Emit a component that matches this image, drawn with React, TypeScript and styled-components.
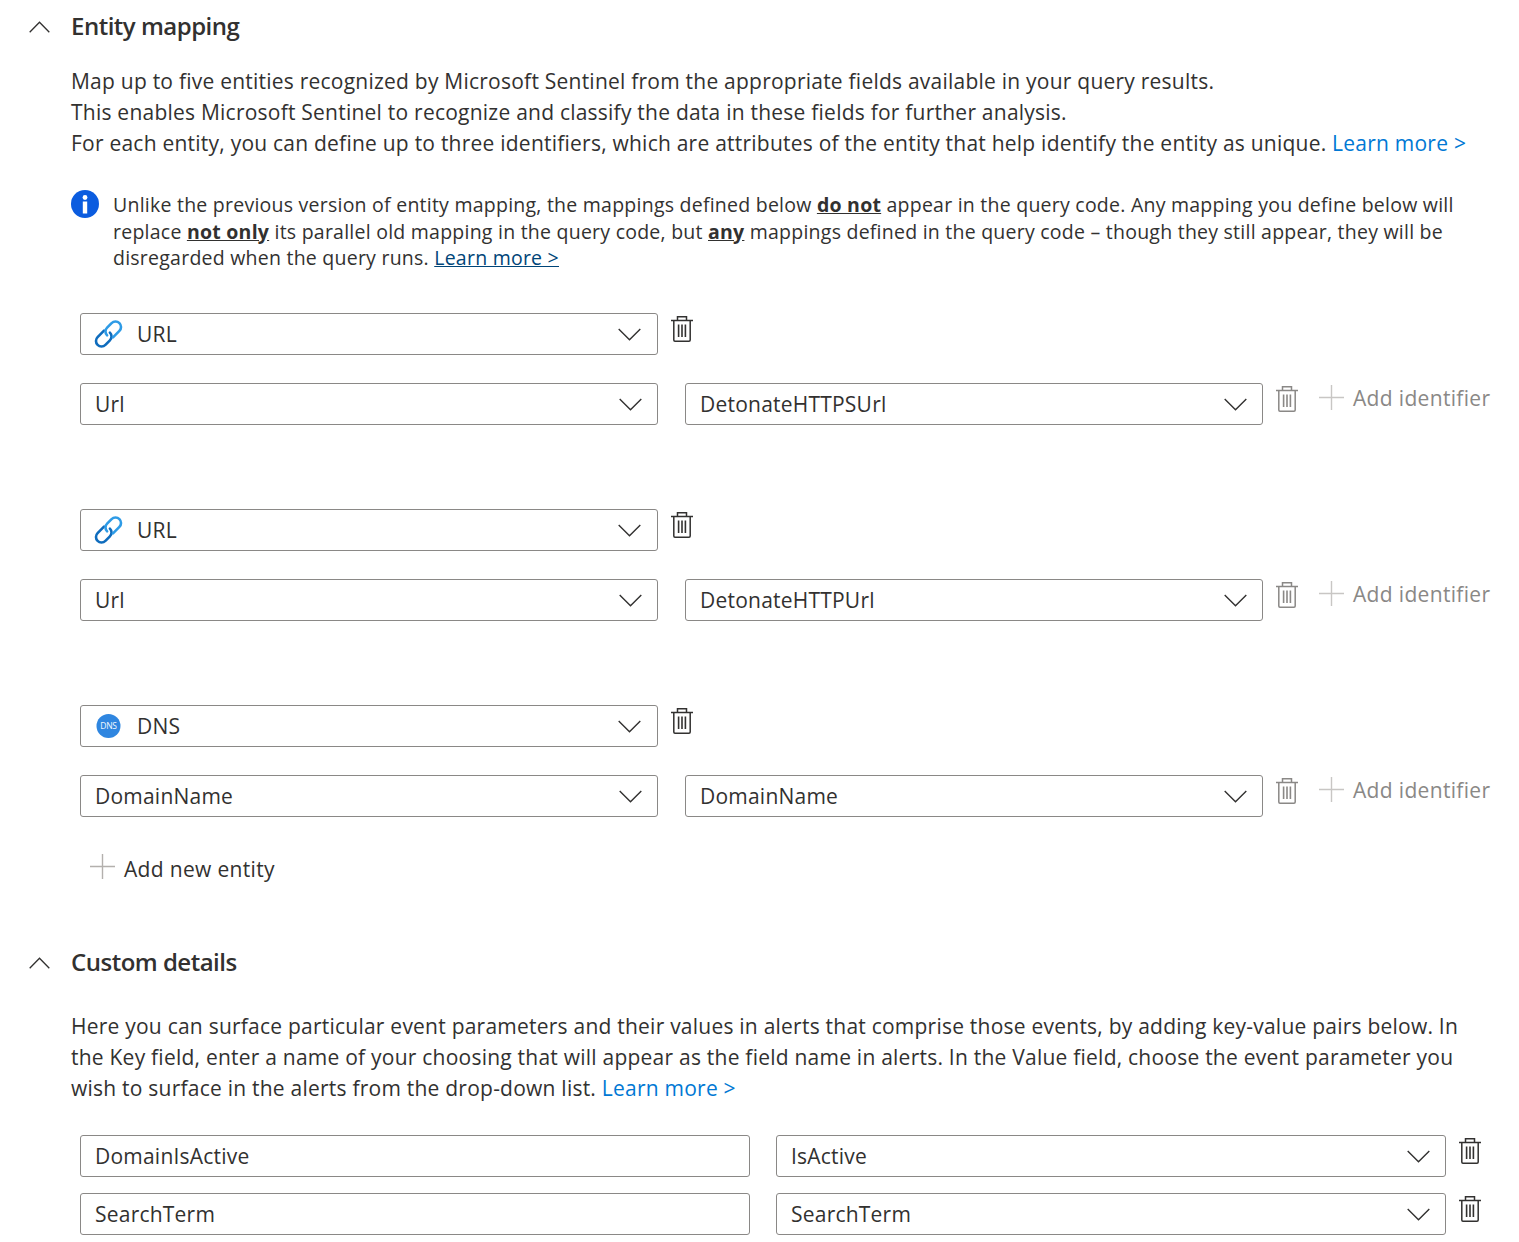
import React from 'react';
import styled, { createGlobalStyle } from 'styled-components';

const GlobalStyle = createGlobalStyle`
  html, body {
    margin: 0;
    padding: 0;
    background: #fff;
    color: #323130;
    font-family: "Open Sans", "Noto Sans", sans-serif;
  }
`;

const Page = styled.div`
  width: 1519px;
  height: 1242px;
  overflow: hidden;
  box-sizing: border-box;
  padding-top: 10px;
`;
const SectionHeader = styled.div<{ $top?: number }>`
  display: flex;
  align-items: center;
  height: 34px;
  padding-left: 29px;
  margin-top: ${({ $top }) => $top ?? 0}px;
`;
const Chevron = styled.svg`
  width: 21px;
  height: 12px;
  margin-right: 21px;
  flex: none;
`;
const Title = styled.h2`
  margin: -2px 0 0;
  font-size: 24px;
  font-weight: 600;
  letter-spacing: -0.5px;
  line-height: 34px;
`;
const Description = styled.p<{ $top: number }>`
  margin: ${({ $top }) => $top}px 0 0 71px;
  width: 1400px;
  font-size: 21px;
  line-height: 31px;
  letter-spacing: 0.23px;
`;
const Link = styled.a`
  color: #0078d4;
  text-decoration: none;
`;
const Notice = styled.div`
  display: flex;
  gap: 14px;
  margin: 33px 0 0 71px;
  width: 1395px;
`;
const NoticeIcon = styled.svg`
  width: 28px;
  height: 28px;
  margin-top: -2px;
  flex: none;
`;
const NoticeText = styled.p`
  margin: 0;
  font-size: 19.5px;
  line-height: 26.5px;
  letter-spacing: 0.24px;
`;
const Strong = styled.b`
  font-weight: 700;
  text-decoration: underline;
`;
const NoticeLink = styled.a`
  color: #004578;
  text-decoration: underline;
`;
const Entity = styled.div<{ $top: number }>`
  margin: ${({ $top }) => $top}px 0 0 80px;
`;
const Row = styled.div<{ $top?: number }>`
  display: flex;
  align-items: flex-start;
  margin-top: ${({ $top }) => $top ?? 0}px;
`;
const Field = styled.div<{ $width: number }>`
  display: flex;
  align-items: center;
  box-sizing: border-box;
  width: ${({ $width }) => $width}px;
  height: 42px;
  padding: 0 15px 0 14px;
  border: 1px solid #8a8886;
  border-radius: 3px;
  font-size: 21px;
  letter-spacing: 0.22px;
  color: #323130;
  flex: none;
`;
const FieldText = styled.span`
  flex: 1;
  white-space: nowrap;
`;
const Caret = styled.svg<{ $shift: boolean }>`
  width: 23px;
  height: 13px;
  margin-top: 2px;
  margin-right: ${({ $shift }) => ($shift ? 1 : 0)}px;
  flex: none;
`;
const EntityIcon = styled.svg`
  width: 30px;
  height: 30px;
  margin: 0 14px 0 -2px;
  flex: none;
`;
const Trash = styled.svg<{ $left: number; $muted?: boolean }>`
  width: 22px;
  height: 26px;
  margin: 3px 0 0 ${({ $left }) => $left}px;
  color: ${({ $muted }) => ($muted ? '#8a8886' : '#323130')};
  flex: none;
`;
const Gap = styled.div<{ $width: number }>`
  width: ${({ $width }) => $width}px;
  flex: none;
`;
const Plus = styled.svg`
  width: 25px;
  height: 25px;
  color: #c8c6c4;
  flex: none;
`;
const Add = styled.div<{ $muted?: boolean }>`
  display: flex;
  align-items: center;
  gap: 9px;
  height: 32px;
  font-size: 21px;
  letter-spacing: 0.33px;
  color: ${({ $muted }) => ($muted ? '#8a8886' : '#323130')};
  white-space: nowrap;
`;
const AddIdentifier = styled(Add)`
  margin: -1px 0 0 21px;
`;
const AddEntity = styled(Add)`
  margin: 36px 0 0 90px;

  ${Plus} {
    margin-bottom: 4px;
    color: #b3b0ad;
  }
`;
const CustomRows = styled.div`
  display: flex;
  flex-direction: column;
  gap: 16px;
  margin: 31px 0 0 80px;
`;

const ChevronUp = () => (
  <Chevron viewBox="0 0 21 12" fill="none">
    <path d="M0.7 11.3 10.5 1.2 20.3 11.3" stroke="#323130" strokeWidth="1.3" />
  </Chevron>
);

const CaretDown = ({ shift }: { shift: boolean }) => (
  <Caret $shift={shift} viewBox="0 0 23 13" fill="none">
    <path d="M0.7 1 11.5 11.8 22.3 1" stroke="#323130" strokeWidth="1.4" />
  </Caret>
);

const TrashIcon = ({ left, muted }: { left: number; muted?: boolean }) => (
  <Trash $left={left} $muted={muted} viewBox="0 0 22 26" fill="none" stroke="currentColor" strokeWidth="1.5">
    <path d="M0 4.6H22M6.5 4.6V0.8H15.5V4.6M2.8 4.6V24Q2.8 25.2 4 25.2H18Q19.2 25.2 19.2 24V4.6" />
    <path strokeWidth="1.6" d="M7.6 8.5V21M11 8.5V21M14.4 8.5V21" />
  </Trash>
);

const PlusIcon = () => (
  <Plus viewBox="0 0 25 25" fill="none" stroke="currentColor" strokeWidth="1.4">
    <path d="M12.5 0V25M0 12.5H25" />
  </Plus>
);

const LinkIcon = () => (
  <EntityIcon viewBox="0 0 30 30" fill="none" strokeLinecap="round" strokeWidth="2.6">
    <path d="M11 11.7 4.6 18.1A5.5 5.5 0 0 0 12.4 25.9L16.9 21.4A5.5 5.5 0 0 0 16.9 13.6" stroke="#0f6cbd" />
    <path d="M20 18.3 26.4 11.9A5.5 5.5 0 0 0 18.6 4.1L14.1 8.6A5.5 5.5 0 0 0 14.1 16.4" stroke="#2e9be6" />
  </EntityIcon>
);

const DnsIcon = () => (
  <EntityIcon viewBox="0 0 30 30">
    <circle cx="15.5" cy="15" r="12" fill="#2f86e0" />
    <text x="15.5" y="18" textAnchor="middle" fontSize="8.5" letterSpacing="-0.3" fill="#f2f8ff" fontFamily="Open Sans, sans-serif">DNS</text>
  </EntityIcon>
);

const Select = ({ width, children, icon }: { width: number; children: string; icon?: React.ReactNode }) => (
  <Field $width={width}>
    {icon}
    <FieldText>{children}</FieldText>
    <CaretDown shift={!!icon} />
  </Field>
);

const entities = [
  { top: 41, name: 'URL', icon: <LinkIcon />, id: 'Url', column: 'DetonateHTTPSUrl' },
  { top: 84, name: 'URL', icon: <LinkIcon />, id: 'Url', column: 'DetonateHTTPUrl' },
  { top: 84, name: 'DNS', icon: <DnsIcon />, id: 'DomainName', column: 'DomainName' },
];

export default function App() {
  return (
    <Page>
      <GlobalStyle />
      <SectionHeader>
        <ChevronUp />
        <Title>Entity mapping</Title>
      </SectionHeader>
      <Description $top={22}>
        Map up to five entities recognized by Microsoft Sentinel from the appropriate fields available in your query results.
        <br />
        This enables Microsoft Sentinel to recognize and classify the data in these fields for further analysis.
        <br />
        For each entity, you can define up to three identifiers, which are attributes of the entity that help identify the entity as unique. <Link>Learn more &gt;</Link>
      </Description>
      <Notice>
        <NoticeIcon viewBox="0 0 28 28">
          <circle cx="14" cy="14" r="14" fill="#0b5cdf" />
          <circle cx="14" cy="7.5" r="2.4" fill="#fff" />
          <rect x="11.8" y="11.5" width="4.4" height="12" fill="#fff" />
        </NoticeIcon>
        <NoticeText>
          Unlike the previous version of entity mapping, the mappings defined below <Strong>do not</Strong> appear in the query code. Any mapping you define below will replace <Strong>not only</Strong> its parallel old mapping in the query code, but <Strong>any</Strong> mappings defined in the query code – though they still appear, they will be disregarded when the query runs. <NoticeLink>Learn more &gt;</NoticeLink>
        </NoticeText>
      </Notice>
      {entities.map((e, i) => (
        <Entity key={i} $top={e.top}>
          <Row>
            <Select width={578} icon={e.icon}>{e.name}</Select>
            <TrashIcon left={13} />
          </Row>
          <Row $top={28}>
            <Select width={578}>{e.id}</Select>
            <Gap $width={27} />
            <Select width={578}>{e.column}</Select>
            <TrashIcon left={13} muted />
            <AddIdentifier $muted>
              <PlusIcon />
              Add identifier
            </AddIdentifier>
          </Row>
        </Entity>
      ))}
      <AddEntity>
        <PlusIcon />
        Add new entity
      </AddEntity>
      <SectionHeader $top={61}>
        <ChevronUp />
        <Title>Custom details</Title>
      </SectionHeader>
      <Description $top={31}>
        Here you can surface particular event parameters and their values in alerts that comprise those events, by adding key-value pairs below. In the Key field, enter a name of your choosing that will appear as the field name in alerts. In the Value field, choose the event parameter you wish to surface in the alerts from the drop-down list. <Link>Learn more &gt;</Link>
      </Description>
      <CustomRows>
        <Row>
          <Field $width={670}>DomainIsActive</Field>
          <Gap $width={26} />
          <Select width={670}>IsActive</Select>
          <TrashIcon left={13} />
        </Row>
        <Row>
          <Field $width={670}>SearchTerm</Field>
          <Gap $width={26} />
          <Select width={670}>SearchTerm</Select>
          <TrashIcon left={13} />
        </Row>
      </CustomRows>
    </Page>
  );
}
